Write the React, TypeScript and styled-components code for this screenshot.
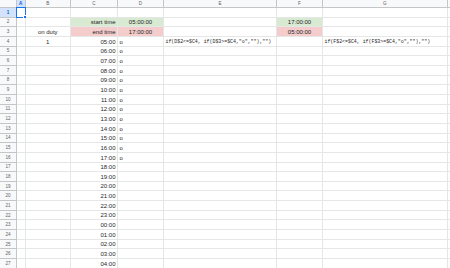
import styled, { createGlobalStyle } from 'styled-components';

const GlobalStyle = createGlobalStyle`
  html, body {
    margin: 0;
    padding: 0;
    background: #fff;
    overflow: hidden;
  }
`;

const COLUMNS = ['A', 'B', 'C', 'D', 'E', 'F', 'G', ''];
const ROW_COUNT = 27;

type Align = 'left' | 'center' | 'right';
type Fill = 'none' | 'green' | 'red';

interface CellData {
  text: string;
  align?: Align;
  fill?: Fill;
  mono?: boolean;
}

const fills: Record<Fill, string> = {
  none: '#ffffff',
  green: '#d9ead3',
  red: '#f4cccc',
};

const Sheet = styled.div`
  display: grid;
  grid-template-columns: 17px 8.5px 45.5px 47px 46px 113px 46px 124.5px 10px;
  grid-template-rows: 8px repeat(${ROW_COUNT}, 9.67px);
  width: 450px;
  height: 268px;
  overflow: hidden;
  font-family: 'Liberation Sans', Arial, sans-serif;
`;

const HeaderCell = styled.div<{ $active?: boolean }>`
  box-sizing: border-box;
  display: flex;
  align-items: center;
  justify-content: center;
  background: ${(p) => (p.$active ? '#d3e3fd' : '#f8f9fa')};
  border-right: 1px solid #c4c7c5;
  border-bottom: 1px solid #c4c7c5;
  font-size: 4.6px;
  font-weight: ${(p) => (p.$active ? 700 : 400)};
  color: ${(p) => (p.$active ? '#0b57d0' : '#5f6368')};
  overflow: hidden;
`;

const Cell = styled.div<{ $align: Align; $fill: Fill; $mono?: boolean }>`
  box-sizing: border-box;
  position: relative;
  display: flex;
  align-items: flex-end;
  justify-content: ${(p) =>
    p.$align === 'right' ? 'flex-end' : p.$align === 'center' ? 'center' : 'flex-start'};
  padding: 0 1.5px 1px;
  background: ${(p) => fills[p.$fill]};
  border-right: 1px solid #e5e6e6;
  border-bottom: 1px solid #e5e6e6;
  font-family: ${(p) =>
    p.$mono ? "'Liberation Mono', 'Courier New', monospace" : "'Liberation Sans', Arial, sans-serif"};
  font-size: ${(p) => (p.$mono ? '4.9px' : '6px')};
  line-height: 1;
  color: #1f1f1f;
  white-space: nowrap;
  overflow: visible;
  z-index: ${(p) => (p.$mono ? 1 : 0)};
`;

const Selection = styled.div`
  position: absolute;
  inset: -1px -1px -1px -1px;
  border: 1.5px solid #1a73e8;
  pointer-events: none;
`;

const Handle = styled.div`
  position: absolute;
  right: -2.5px;
  bottom: -2.5px;
  width: 4px;
  height: 4px;
  background: #1a73e8;
  border: 0.5px solid #fff;
  box-sizing: border-box;
`;

const hours = Array.from({ length: 24 }, (_, i) => String((5 + i) % 24).padStart(2, '0') + ':00');

function cellAt(row: number, col: string): CellData | null {
  if (row === 2) {
    if (col === 'C') return { text: 'start time', align: 'right', fill: 'green' };
    if (col === 'D') return { text: '05:00:00', align: 'center', fill: 'green' };
    if (col === 'F') return { text: '17:00:00', align: 'center', fill: 'green' };
  }
  if (row === 3) {
    if (col === 'B') return { text: 'on duty', align: 'center' };
    if (col === 'C') return { text: 'end time', align: 'right', fill: 'red' };
    if (col === 'D') return { text: '17:00:00', align: 'center', fill: 'red' };
    if (col === 'F') return { text: '05:00:00', align: 'center', fill: 'red' };
  }
  if (row === 4) {
    if (col === 'B') return { text: '1', align: 'center' };
    if (col === 'E') return { text: 'if(D$2<=$C4, if(D$3>=$C4,"o",""),"")', mono: true };
    if (col === 'G') return { text: 'if(F$2<=$C4, if(F$3>=$C4,"o",""),"")', mono: true };
  }
  if (row >= 4 && col === 'C') return { text: hours[row - 4], align: 'right' };
  if (row >= 4 && row <= 16 && col === 'D') return { text: 'o' };
  return null;
}

export default function App() {
  const rows = Array.from({ length: ROW_COUNT }, (_, i) => i + 1);
  return (
    <>
      <GlobalStyle />
      <Sheet>
        <HeaderCell />
        {COLUMNS.map((col, i) => (
          <HeaderCell key={`h${i}`} $active={col === 'A'}>
            {col}
          </HeaderCell>
        ))}
        {rows.map((row) => [
          <HeaderCell key={`r${row}`} $active={row === 1}>
            {row}
          </HeaderCell>,
          ...COLUMNS.map((col, i) => {
            const data = cellAt(row, col);
            return (
              <Cell
                key={`${row}-${i}`}
                $align={data?.align ?? 'left'}
                $fill={data?.fill ?? 'none'}
                $mono={data?.mono}
              >
                {data?.text}
                {row === 1 && col === 'A' && (
                  <Selection>
                    <Handle />
                  </Selection>
                )}
              </Cell>
            );
          }),
        ])}
      </Sheet>
    </>
  );
}
